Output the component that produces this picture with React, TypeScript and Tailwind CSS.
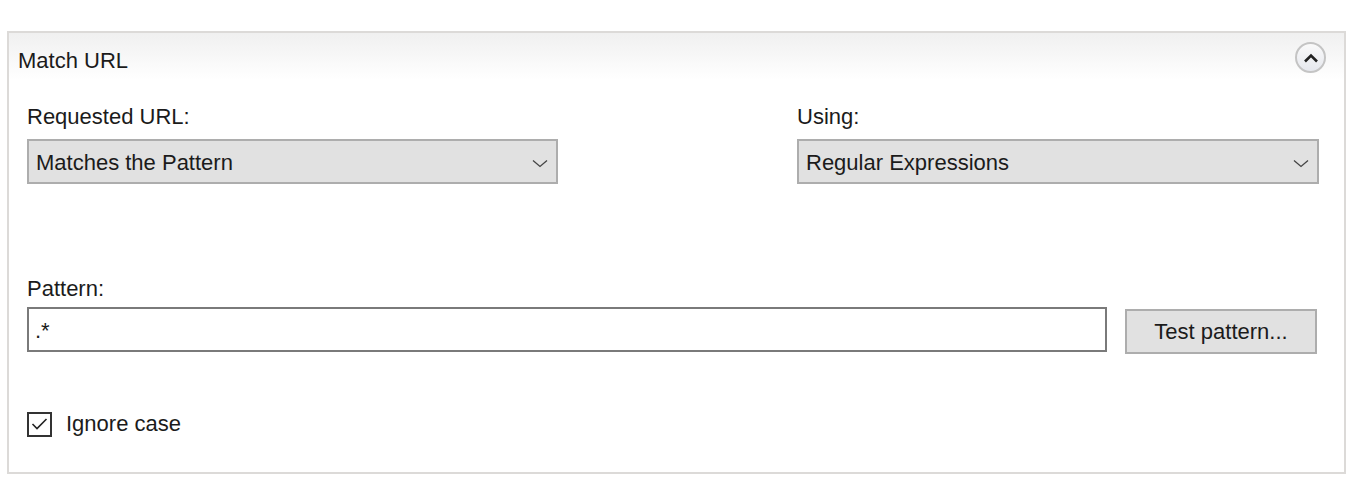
import React from "react";

function Chevron() {
  return (
    <svg width="16" height="9" viewBox="0 0 16 9" className="shrink-0 mt-[1px]">
      <path d="M1 1.5 L8 7.5 L15 1.5" fill="none" stroke="#444" strokeWidth="1.3" />
    </svg>
  );
}

function Select({ value, width }: { value: string; width: string }) {
  return (
    <div
      className={`${width} h-[45px] border-2 border-[#adadad] bg-[#e1e1e1] flex items-center justify-between pl-[7px] pr-[8px] pt-[2px]`}
    >
      <span className="leading-[26px]">{value}</span>
      <Chevron />
    </div>
  );
}

export default function App() {
  return (
    <div className="w-[1366px] h-[493px] bg-white text-[#1b1b1b] text-[22px] font-['Liberation_Sans',Arial,sans-serif] overflow-hidden pt-[31px] pl-[7px]">
      <div className="w-[1339px] h-[443px] border-2 border-[#dcdad8]">
        {/* header */}
        <div className="h-[47px] bg-gradient-to-b from-[#f0f0f0] to-white flex justify-between items-start pl-[9px] pr-[18px]">
          <span className="leading-[26px] mt-[15px]">Match URL</span>
          <button className="mt-[9px] w-[31px] h-[31px] rounded-full border-2 border-[#c4c4c4] bg-gradient-to-b from-[#fafafa] to-[#e6e8ee] flex items-center justify-center">
            <svg width="16" height="10" viewBox="0 0 16 10">
              <path d="M2 8.5 L8 2.5 L14 8.5" fill="none" stroke="#222" strokeWidth="2.6" />
            </svg>
          </button>
        </div>

        {/* body */}
        <div className="pl-[18px]">
          <div className="flex mt-[24px]">
            <div className="w-[770px] flex flex-col gap-[9px]">
              <span className="leading-[26px]">Requested URL:</span>
              <Select value="Matches the Pattern" width="w-[531px]" />
            </div>
            <div className="flex flex-col gap-[9px]">
              <span className="leading-[26px]">Using:</span>
              <Select value="Regular Expressions" width="w-[522px]" />
            </div>
          </div>

          <div className="mt-[92px] flex flex-col gap-[5px]">
            <span className="leading-[26px]">Pattern:</span>
            <div className="flex items-start gap-[18px]">
              <div className="w-[1080px] h-[45px] border-2 border-[#7a7a7a] bg-white flex items-center pl-[6px] pt-[2px]">
                <span className="leading-[26px]">.*</span>
              </div>
              <button className="mt-[2px] w-[192px] h-[45px] border-2 border-[#adadad] bg-[#e1e1e1] flex items-center justify-center pt-[1px]">
                <span className="leading-[26px]">Test pattern...</span>
              </button>
            </div>
          </div>

          <div className="mt-[57px] flex items-center gap-[14px]">
            <div className="w-[25px] h-[25px] border-2 border-[#333] bg-white flex items-center justify-center">
              <svg width="17" height="14" viewBox="0 0 17 14">
                <path d="M1.5 7 L6 11.5 L15.5 2" fill="none" stroke="#222" strokeWidth="1.6" />
              </svg>
            </div>
            <span className="leading-[26px]">Ignore case</span>
          </div>
        </div>
      </div>
    </div>
  );
}
